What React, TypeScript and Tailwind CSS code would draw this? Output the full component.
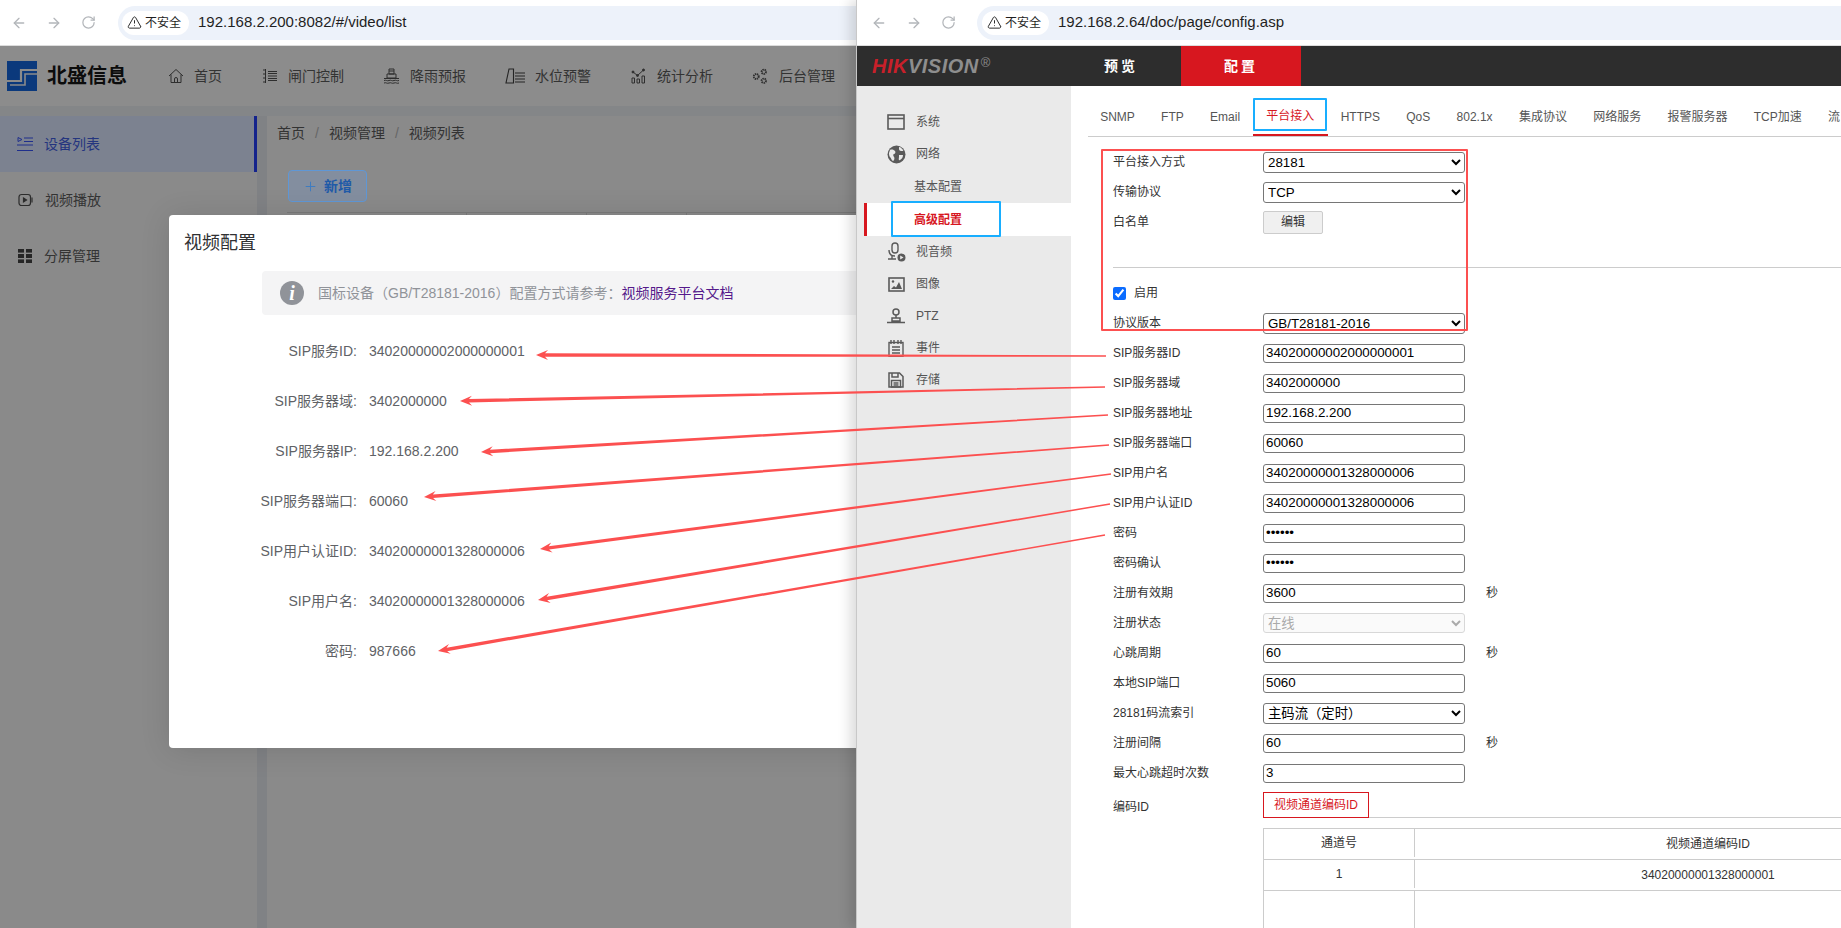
import React from 'react';
import { ArrowLeft, ArrowRight, RotateCw, TriangleAlert, Plus } from 'lucide-react';

const FONT = "font-['Liberation_Sans','Noto_Sans_CJK_SC',sans-serif]";

const LogoMark = () => (
  <svg width="30" height="30" viewBox="0 0 30 30" className="flex-none">
    <rect width="30" height="30" fill="#0b397c" />
    <path d="M30 9H14V20H0" fill="none" stroke="#8b8b8b" strokeWidth="2.2" />
    <path d="M30 13H18V24H3" fill="none" stroke="#8b8b8b" strokeWidth="1.6" />
  </svg>
);

const HomeI = () => (
  <svg width="16" height="16" viewBox="0 0 16 16" fill="none" stroke="#2e2e2e" strokeWidth="1">
    <path d="M1 8 8 1.5 15 8M3 6.5V14.5H13V6.5" />
    <path d="M6.5 14.5V11a1.5 1.5 0 0 1 3 0v3.5" />
  </svg>
);
const GateI = () => (
  <svg width="16" height="16" viewBox="0 0 16 16" fill="none" stroke="#2e2e2e" strokeWidth="1">
    <path d="M3.5 1v14M1 2h2.5M1 6h2.5M1 10h2.5M1 14h2.5" />
    <path d="M6 3.5h9M6 5.5h9M6 8h9M6 10.5h9M6 12.5h9" />
  </svg>
);
const RainI = () => (
  <svg width="17" height="17" viewBox="0 0 17 17" fill="none" stroke="#2e2e2e" strokeWidth="1">
    <path d="M6 1h5v5H6zM4 6h9v4H4zM6 3h5M1 10.5h15" />
    <path d="M1 12.5c2-1 3 1 5 0s3 1 5 0 3 1 5 0M1 15c2-1 3 1 5 0s3 1 5 0 3 1 5 0" />
  </svg>
);
const LevelI = () => (
  <svg width="20" height="16" viewBox="0 0 20 16" fill="none" stroke="#242424" strokeWidth="1.1">
    <path d="M4 1h4.5V15H1z" />
    <path d="M10 5h10M10 8h10M10 11h10M10 14h10" />
  </svg>
);
const StatI = () => (
  <svg width="15" height="16" viewBox="0 0 15 16" fill="#2e2e2e" stroke="#2e2e2e" strokeWidth="1">
    <path d="M2 4l4.5 3.5L12.5 2" fill="none" />
    <circle cx="2" cy="4" r="1" />
    <circle cx="6.5" cy="7.5" r="1" />
    <circle cx="12.5" cy="2" r="1" />
    <path d="M1 10h2.5v5H1zM6 11h2.5v4H6zM11 8h2.5v7H11z" fill="none" />
  </svg>
);
const GearI = () => (
  <svg width="18" height="17" viewBox="0 0 18 17" fill="none" stroke="#2e2e2e">
    <circle cx="4.5" cy="8.5" r="2.6" strokeWidth="2" strokeDasharray="1.4 .7" />
    <circle cx="12.5" cy="3.5" r="2.3" strokeWidth="2" strokeDasharray="1.4 .7" />
    <circle cx="12.5" cy="13" r="2.3" strokeWidth="2" strokeDasharray="1.4 .7" />
  </svg>
);

const ListI = () => (
  <svg width="16" height="16" viewBox="0 0 16 16" fill="none" stroke="#1f2f8c" strokeWidth="1">
    <path d="M1 1.5 5 3.5 1 5.5z" />
    <path d="M7 2h9M7 5.5h9M0 9h16M0 14.5h16" />
  </svg>
);
const PlayI = () => (
  <svg width="15" height="14" viewBox="0 0 15 14" fill="none" stroke="#2c2c2c" strokeWidth="1.2">
    <rect x="1" y="1.5" width="11.5" height="11" rx="2.5" />
    <path d="M14 4.5v5" />
    <path d="M5.5 5 8.5 7l-3 2z" fill="#2c2c2c" />
  </svg>
);
const GridI = () => (
  <svg width="14" height="14" viewBox="0 0 14 14" fill="#262626">
    <rect width="6" height="3.6" />
    <rect x="8" width="6" height="3.6" />
    <rect y="5" width="6" height="4" />
    <rect x="8" y="5" width="6" height="4" />
    <rect y="10.4" width="6" height="3.6" />
    <rect x="8" y="10.4" width="6" height="3.6" />
  </svg>
);

const C = '#5a5a5a';
const SysI = () => (
  <svg width="18" height="16" viewBox="0 0 18 16" fill="none" stroke={C} strokeWidth="1.6">
    <rect x="1" y="1" width="16" height="14" />
    <path d="M1 4.5h16" />
  </svg>
);
const GlobeI = () => (
  <svg width="19" height="19" viewBox="0 0 19 19">
    <circle cx="9.5" cy="9.5" r="9" fill={C} />
    <path d="M3 5c2-1 4 0 5 1s0 3-1 3-1 2 0 3 0 4-1 4-2-3-3-4-1-4-1-4zM12 2c2 0 3 2 4 3s-1 1-2 1-2-1-2-2zM12 10h4c0 2-1 4-3 5s-1-2-1-3z" fill="#eaeaea" />
  </svg>
);
const MicI = () => (
  <svg width="19" height="20" viewBox="0 0 19 20" fill="none" stroke={C} strokeWidth="1.4">
    <rect x="5" y="1" width="6" height="10" rx="3" />
    <path d="M2 8c0 4 2 6 6 6M1 17h8M5 14v3" />
    <circle cx="14.5" cy="15.5" r="4" fill={C} stroke="none" />
    <path d="M13.2 13.5 16.5 15.5l-3.3 2z" fill="#eaeaea" stroke="none" />
  </svg>
);
const ImageI = () => (
  <svg width="17" height="15" viewBox="0 0 17 15" fill="none" stroke={C} strokeWidth="1.6">
    <rect x="1" y="1" width="15" height="13" />
    <circle cx="5" cy="4.5" r="1.2" fill={C} stroke="none" />
    <path d="M3 12l3-3 2 1.5L11 5l3 7z" fill={C} stroke="none" />
  </svg>
);
const PtzI = () => (
  <svg width="18" height="17" viewBox="0 0 18 17" fill="none" stroke={C} strokeWidth="1.5">
    <circle cx="9" cy="4" r="3" />
    <path d="M9 7v3M5 10h8v3H5zM0 14.5h18" />
  </svg>
);
const EventI = () => (
  <svg width="16" height="17" viewBox="0 0 16 17" fill="none" stroke={C} strokeWidth="1.4">
    <rect x="1" y="2.5" width="14" height="14" />
    <path d="M3 0v4M6 0v4M10 0v4M13 0v4M4 7h8M4 10h8M4 13h8" />
  </svg>
);
const SaveI = () => (
  <svg width="16" height="16" viewBox="0 0 16 16" fill="none" stroke={C} strokeWidth="1.5">
    <path d="M1 1h10.5L15 4.5V15H1z" />
    <path d="M4 1v4h6V1M3.5 8.5h9V15h-9zM5.5 11h5M5.5 13h5" />
  </svg>
);

const navItems: [React.ReactNode, string, string][] = [
  [<HomeI />, '首页', 'w-[17px]'],
  [<GateI />, '闸门控制', 'w-[17px]'],
  [<RainI />, '降雨预报', 'w-[17px]'],
  [<LevelI />, '水位预警', 'w-[20px]'],
  [<StatI />, '统计分析', 'w-[17px]'],
  [<GearI />, '后台管理', 'w-[17px]'],
];

const BrowserBar = ({ url, gapClass, pillClass }: { url: string; gapClass: string; pillClass: string }) => (
  <div className="flex h-[46px] flex-none items-center border-b border-[#dcdcdc] bg-white">
    <div className={`flex items-center text-[#b3b6ba] ${gapClass}`}>
      <ArrowLeft size={16} />
      <ArrowRight size={16} />
      <RotateCw size={15} />
    </div>
    <div className={`flex h-[34px] flex-1 items-center bg-[#edf2fa] ${pillClass}`}>
      <div className="flex h-[24px] items-center gap-[3px] rounded-full bg-white pl-[5px] pr-[8px] text-[12px] text-[#1f1f1f]">
        <TriangleAlert size={15} strokeWidth={1.5} />
        <span>不安全</span>
      </div>
      <span className="ml-[9px] text-[15px] text-[#1f1f1f]">{url}</span>
    </div>
  </div>
);

const sipRows: [string, string][] = [
  ['SIP服务ID:', '34020000002000000001'],
  ['SIP服务器域:', '3402000000'],
  ['SIP服务器IP:', '192.168.2.200'],
  ['SIP服务器端口:', '60060'],
  ['SIP用户认证ID:', '34020000001328000006'],
  ['SIP用户名:', '34020000001328000006'],
  ['密码:', '987666'],
];

const LeftWindow = () => (
  <div className="relative flex h-[928px] w-[856px] flex-none flex-col overflow-hidden bg-[#8a8a8a]">
    <BrowserBar url="192.168.2.200:8082/#/video/list" gapClass="w-[118px] justify-start gap-[19px] pl-[11px]" pillClass="rounded-l-[17px] pl-[4px]" />
    <header className="flex h-[60px] flex-none items-center bg-[#8c8c8c] pl-[7px]">
      <LogoMark />
      <span className="ml-[10px] w-[80px] text-[20px] font-bold text-[#0c0c0c]">北盛信息</span>
      <nav className="ml-[40px] flex items-center gap-[39px]">
        {navItems.map(([icon, label, w]) => (
          <div key={label} className="flex items-center gap-[10px] text-[14px] text-[#333333]">
            <span className={`flex justify-center ${w}`}>{icon}</span>
            <span className="whitespace-nowrap">{label}</span>
          </div>
        ))}
      </nav>
    </header>
    <div className="h-[10px] flex-none bg-[#848688]" />
    <div className="flex flex-1">
      <aside className="w-[257px] flex-none bg-[#8a8a8a] text-[14px]">
        <div className="flex h-[56px] items-center gap-[11px] border-r-[3px] border-[#14238c] bg-[#7c8290] pl-[17px] text-[#24357f]">
          <ListI />
          <span>设备列表</span>
        </div>
        <div className="flex h-[56px] items-center gap-[12px] pl-[18px] text-[#333333]">
          <PlayI />
          <span>视频播放</span>
        </div>
        <div className="flex h-[56px] items-center gap-[12px] pl-[18px] text-[#333333]">
          <GridI />
          <span>分屏管理</span>
        </div>
      </aside>
      <div className="w-[10px] flex-none bg-[#808285]" />
      <main className="flex-1 bg-[#8a8a8a] pl-[10px]">
        <div className="flex h-[34px] items-center gap-[10px] text-[14px] text-[#333333]">
          <span>首页</span>
          <span className="text-[#666666]">/</span>
          <span>视频管理</span>
          <span className="text-[#666666]">/</span>
          <span>视频列表</span>
        </div>
        <div className="ml-[11px] mt-[20px] flex h-[32px] w-[79px] items-center justify-center gap-[6px] rounded-[4px] border border-[#5f97d6] bg-[#838e9f] text-[14px] font-bold text-[#1f5aa8]">
          <Plus size={15} strokeWidth={1.6} className="text-[#3f7cc0]" />
          <span>新增</span>
        </div>
        <div className="ml-[10px] mt-[10px] flex h-[6px] border-t border-[#7a7a7a]">
          <div className="w-[180px] border-r border-[#7a7a7a]" />
          <div className="w-[120px] border-r border-[#7a7a7a]" />
          <div className="w-[100px] border-r border-[#7a7a7a]" />
        </div>
      </main>
    </div>

    <div className="absolute left-[169px] top-[215px] h-[533px] w-[800px] rounded-[4px] bg-white shadow-[0_2px_30px_rgba(0,0,0,0.12)]">
      <div className="flex h-[56px] items-center pl-[15px] text-[18px] text-[#303133]">视频配置</div>
      <div className="ml-[93px] flex h-[44px] items-center gap-[14px] rounded-[4px] bg-[#f4f4f5] pl-[18px] text-[14px] text-[#909399]">
        <span className="flex h-[24px] w-[24px] items-center justify-center rounded-full bg-[#909399] font-['Liberation_Serif',serif] text-[20px] font-bold italic text-white">i</span>
        <span>
          国标设备（GB/T28181-2016）配置方式请参考：<span className="text-[#551a8b]">视频服务平台文档</span>
        </span>
      </div>
      <div className="mt-[11px]">
        {sipRows.map(([k, v]) => (
          <div key={k} className="flex h-[50px] items-center text-[14px] text-[#606266]">
            <span className="w-[188px] text-right">{k}</span>
            <span className="ml-[12px]">{v}</span>
          </div>
        ))}
      </div>
    </div>
  </div>
);

const sideItems: [React.ReactNode, string][] = [
  [<SysI />, '系统'],
  [<GlobeI />, '网络'],
];
const sideItems2: [React.ReactNode, string][] = [
  [<MicI />, '视音频'],
  [<ImageI />, '图像'],
  [<PtzI />, 'PTZ'],
  [<EventI />, '事件'],
  [<SaveI />, '存储'],
];

const SideRow = ({ icon, label }: { icon: React.ReactNode; label: string }) => (
  <div className="flex h-[32px] items-center pl-[29px]">
    <span className="flex w-[20px] justify-center">{icon}</span>
    <span className="ml-[10px]">{label}</span>
  </div>
);

const tabs = ['SNMP', 'FTP', 'Email', '平台接入', 'HTTPS', 'QoS', '802.1x', '集成协议', '网络服务', '报警服务器', 'TCP加速', '流'];

const Row = ({ label, children }: { label: string; children: React.ReactNode }) => (
  <div className="flex h-[30px] items-center pl-[25px]">
    <span className="w-[150px] flex-none text-[12px] text-[#333333]">{label}</span>
    {children}
  </div>
);

const inputCls = 'h-[19px] w-[202px] rounded-[3px] border border-[#767676] bg-white pl-[2px] text-[13.33px] text-black';
const selectCls = 'h-[21px] w-[202px] appearance-auto rounded-[3px] border border-[#767676] bg-white text-[13.33px] text-black';

const Input = ({ value, type = 'text', unit }: { value: string; type?: string; unit?: boolean }) => (
  <>
    <input className={inputCls} readOnly type={type} value={value} />
    {unit && <span className="ml-[21px] text-[12px] text-[#333333]">秒</span>}
  </>
);
const Select = ({ value }: { value: string }) => (
  <select className={selectCls} value={value} onChange={() => {}}>
    <option>{value}</option>
  </select>
);

const RightWindow = () => (
  <div className="relative z-10 flex h-[928px] flex-1 flex-col overflow-hidden border-l border-[#c8c8c8] bg-white shadow-[-6px_0_12px_rgba(0,0,0,0.14)]">
    <BrowserBar url="192.168.2.64/doc/page/config.asp" gapClass="w-[120px] justify-start gap-[19px] pl-[14px]" pillClass="rounded-l-[17px] pl-[5px]" />
    <div className="flex h-[40px] flex-none items-stretch bg-[#2d2d2d]">
      <div className="flex w-[204px] items-center pl-[15px] text-[20px] font-bold italic tracking-[0.5px]">
        <span className="text-[#c8202a]">HIK</span>
        <span className="text-[#8e8e8e]">VISION</span>
        <span className="ml-[2px] -translate-y-[3px] text-[13px] font-normal not-italic text-[#8e8e8e]">®</span>
      </div>
      <div className="flex w-[120px] items-center justify-center text-[14px] font-bold tracking-[3px] text-white">预览</div>
      <div className="flex w-[120px] items-center justify-center bg-[#d7171f] text-[14px] font-bold tracking-[3px] text-white">配置</div>
    </div>
    <div className="flex flex-1">
      <aside className="w-[214px] flex-none bg-[#eaeaea] pt-[20px] text-[12px] text-[#555555]">
        {sideItems.map(([i, l]) => (
          <SideRow key={l} icon={i} label={l} />
        ))}
        <div className="flex h-[33px] items-center pl-[57px]">基本配置</div>
        <div className="ml-[7px] flex h-[33px] items-center border-l-[3px] border-[#d7171f] bg-white pl-[47px] font-bold text-[#d7171f]">高级配置</div>
        {sideItems2.map(([i, l]) => (
          <SideRow key={l} icon={i} label={l} />
        ))}
      </aside>
      <main className="min-w-0 flex-1 pl-[17px]">
        <div className="flex h-[51px] items-stretch border-b border-[#cccccc] text-[12px] text-[#555555]">
          {tabs.map((t, i) => (
            <div
              key={t}
              className={
                t === '平台接入'
                  ? 'flex flex-none items-center whitespace-nowrap border-b-[2px] border-[#d7171f] px-[13.15px] pt-[11px] text-[#d7171f]'
                  : i === 0
                    ? '-ml-px flex flex-none items-center whitespace-nowrap px-[13.15px] pt-[11px]'
                    : 'flex flex-none items-center whitespace-nowrap px-[13.15px] pt-[11px]'
              }
            >
              {t}
            </div>
          ))}
        </div>
        <div className="pt-[10px]">
          <Row label="平台接入方式"><Select value="28181" /></Row>
          <Row label="传输协议"><Select value="TCP" /></Row>
          <Row label="白名单">
            <button className="h-[23px] w-[60px] rounded-[2px] border border-[#cccccc] bg-[#f0f0f0] text-[12px] text-[#333333]">编辑</button>
          </Row>
          <div className="ml-[25px] mt-[30px] h-px bg-[#cccccc]" />
          <div className="mt-[10px] flex h-[30px] items-center gap-[8px] pl-[25px] text-[12px] text-[#333333]">
            <input type="checkbox" defaultChecked className="m-0 h-[13px] w-[13px] accent-[#0b6cff]" />
            <span>启用</span>
          </div>
          <Row label="协议版本"><Select value="GB/T28181-2016" /></Row>
          <Row label="SIP服务器ID"><Input value="34020000002000000001" /></Row>
          <Row label="SIP服务器域"><Input value="3402000000" /></Row>
          <Row label="SIP服务器地址"><Input value="192.168.2.200" /></Row>
          <Row label="SIP服务器端口"><Input value="60060" /></Row>
          <Row label="SIP用户名"><Input value="34020000001328000006" /></Row>
          <Row label="SIP用户认证ID"><Input value="34020000001328000006" /></Row>
          <Row label="密码"><Input type="password" value="987666" /></Row>
          <Row label="密码确认"><Input type="password" value="987666" /></Row>
          <Row label="注册有效期"><Input value="3600" unit /></Row>
          <Row label="注册状态">
            <select disabled value="在线" onChange={() => {}} className="h-[20px] w-[202px] appearance-auto rounded-[3px] border border-[#d8d8d8] bg-[#fafafa] text-[13.33px] text-[#aaaaaa]">
              <option>在线</option>
            </select>
          </Row>
          <Row label="心跳周期"><Input value="60" unit /></Row>
          <Row label="本地SIP端口"><Input value="5060" /></Row>
          <Row label="28181码流索引"><Select value="主码流（定时）" /></Row>
          <Row label="注册间隔"><Input value="60" unit /></Row>
          <Row label="最大心跳超时次数"><Input value="3" /></Row>
          <div className="mt-[4px] flex items-center pl-[25px]">
            <span className="w-[150px] flex-none pt-[4px] text-[12px] text-[#333333]">编码ID</span>
            <div className="flex flex-1 items-end">
              <div className="flex h-[26px] w-[106px] flex-none items-center justify-center border border-[#d7171f] text-[12px] text-[#d7171f]">视频通道编码ID</div>
              <div className="flex-1 border-b border-[#cccccc]" />
            </div>
          </div>
          <div className="ml-[175px] mt-[10px] w-[800px] border-l border-t border-[#cccccc] text-center text-[12px] text-[#333333]">
            <div className="flex h-[31px] border-b border-[#cccccc]">
              <div className="flex h-[28px] w-[151px] items-center justify-center border-r border-[#cccccc]">通道号</div>
              <div className="flex w-[586px] items-center justify-center">视频通道编码ID</div>
            </div>
            <div className="flex h-[31px] border-b border-[#cccccc]">
              <div className="flex h-[28px] w-[151px] items-center justify-center border-r border-[#cccccc]">1</div>
              <div className="flex w-[586px] items-center justify-center">34020000001328000001</div>
            </div>
            <div className="flex h-[40px]">
              <div className="w-[151px] border-r border-[#cccccc]" />
            </div>
          </div>
        </div>
      </main>
    </div>
  </div>
);

const arrows: [number, number, number, number][] = [
  [1106, 356, 536, 355],
  [1105, 387, 460, 401],
  [1108, 415, 481, 452],
  [1109, 445, 424, 497],
  [1111, 474, 540, 549],
  [1110, 504, 538, 600],
  [1105, 535, 438, 651],
];

const arrowPoints = ([sx, sy, tx, ty]: [number, number, number, number]) => {
  const len = Math.hypot(sx - tx, sy - ty);
  const dx = (sx - tx) / len;
  const dy = (sy - ty) / len;
  const nx = -dy;
  const ny = dx;
  const p = (along: number, side: number, ox = tx, oy = ty) => `${ox + dx * along + nx * side},${oy + dy * along + ny * side}`;
  return [p(0, 0), p(12, 5), p(9, 1.7), p(0, 0.7, sx, sy), p(0, -0.7, sx, sy), p(9, -1.7), p(12, -5)].join(' ');
};

export default function App() {
  return (
    <div className={`relative flex h-[928px] w-[1841px] overflow-hidden bg-white ${FONT}`}>
      <LeftWindow />
      <RightWindow />
      <svg className="pointer-events-none absolute left-0 top-0 z-20" width="1841" height="928">
        {arrows.map((a, i) => (
          <polygon key={i} points={arrowPoints(a)} fill="#fc5050" />
        ))}
      </svg>
      <div className="pointer-events-none absolute left-[1253px] top-[98px] z-20 h-[33px] w-[74px] rounded-[1px] border-2 border-[#18aeff]" />
      <div className="pointer-events-none absolute left-[891px] top-[201px] z-20 h-[36px] w-[110px] rounded-[1px] border-2 border-[#18aeff]" />
      <div className="pointer-events-none absolute left-[1101px] top-[149px] z-20 h-[182px] w-[367px] rounded-[1px] border-2 border-[#fc5050]" />
    </div>
  );
}
